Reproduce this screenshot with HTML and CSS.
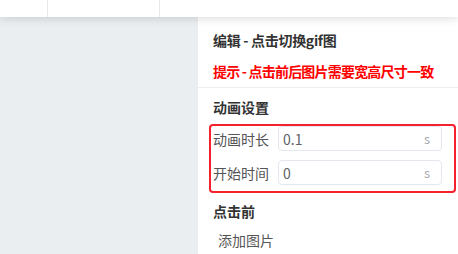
FILE: index.html
```html
<!DOCTYPE html>
<html lang="zh">
<head>
<meta charset="UTF-8">
<title>动画设置</title>
<link rel="stylesheet" href="styles.css">
</head>
<body>

<div class="topbar">
    <div class="tab tab-first"></div>
    <div class="tab tab-second"></div>
</div>

<div class="main">
    <div class="canvas"></div>
    <div class="panel">
        <div class="line title">编辑 - 点击切换gif图</div>
        <div class="line hint">提示 - 点击前后图片需要宽高尺寸一致</div>
        <div class="group-title">动画设置</div>
        <div class="anim-box">
            <div class="field">
                <label class="field-label">动画时长</label>
                <div class="input">
                    <span class="input-value">0.1</span>
                    <span class="input-suffix">s</span>
                </div>
            </div>
            <div class="field">
                <label class="field-label">开始时间</label>
                <div class="input">
                    <span class="input-value">0</span>
                    <span class="input-suffix">s</span>
                </div>
            </div>
        </div>
        <div class="group-title before">点击前</div>
        <div class="add-image">添加图片</div>
    </div>
</div>

</body>
</html>
```

FILE: styles.css
```css
body { margin: 0; font-family: "Noto Sans CJK SC", "Noto Sans", sans-serif; font-size: 14px; color: #333; background: #fff; overflow: hidden; }
.topbar { height: 17px; display: flex; background: #fff; position: relative; z-index: 1; box-shadow: 0 2px 8px rgba(0, 0, 0, 0.13); }
.tab { height: 17px; border-right: 1px solid #e8e8e8; }
.tab-first { width: 47px; }
.tab-second { width: 111px; }
.main { display: flex; height: 237px; }
.canvas { flex: 0 0 198px; background: #eaeef1; }
.panel { flex: 1; background: #fff; min-width: 0; }
.line { padding: 0 15px; line-height: 32px; font-weight: bold; white-space: nowrap; }
.title { margin-top: 7px; letter-spacing: -0.3px; }
.hint { color: #f00; line-height: 31px; border-bottom: 1px solid #eee; letter-spacing: -0.8px; }
.group-title { padding: 0 15px; line-height: 22px; font-weight: bold; margin-top: 8px; }
.group-title.before { margin-top: 7px; }
.anim-box { margin: 6px 2px 0 11px; border: 2px solid #f5222d; border-radius: 4px; padding: 0 12px 6px 2px; display: flex; flex-direction: column; gap: 9px; }
.field { display: flex; align-items: center; height: 25px; }
.field-label { width: 65px; color: #555; }
.input { flex: 1; height: 23px; border: 1px solid #e4e7ed; border-radius: 4px; display: flex; align-items: center; justify-content: space-between; padding: 0 11px 0 4px; color: #606266; }
.input-suffix { color: #a8abb2; font-size: 13px; }
.add-image { padding: 0 20px; line-height: 22px; margin-top: 7px; color: #555; }
```
